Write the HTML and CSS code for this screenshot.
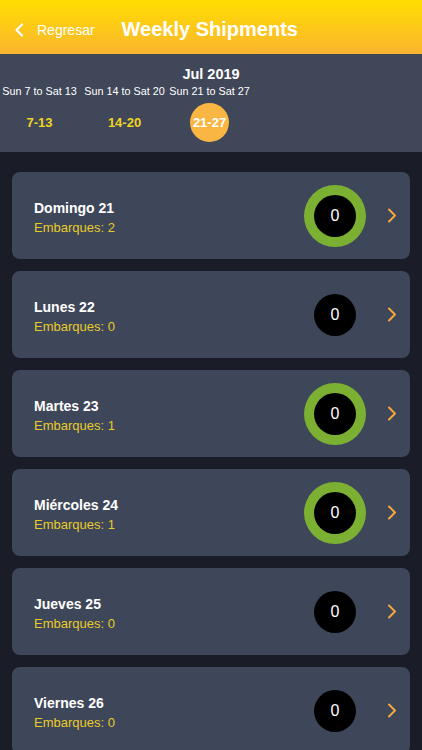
FILE: index.html
```html
<!DOCTYPE html>
<html lang="es">
<head>
    <meta charset="UTF-8">
    <meta name="viewport" content="width=device-width, initial-scale=1.0">
    <title>Weekly Shipments</title>
    <link rel="stylesheet" href="styles.css">
</head>
<body>
    <div class="header">
        <a class="back" href="#">
            <svg width="10" height="14" viewBox="0 0 10 14"><path d="M8 1.5 L2.5 7 L8 12.5" fill="none" stroke="#fff" stroke-width="2.2" stroke-linecap="round" stroke-linejoin="round"/></svg>
            <span>Regresar</span>
        </a>
        <h1>Weekly Shipments</h1>
    </div>

    <div class="weeks">
        <div class="month">Jul 2019</div>
        <div class="week-row">
            <div class="week">
                <div class="week-label">Sun 7 to Sat 13</div>
                <div class="week-num">7-13</div>
            </div>
            <div class="week">
                <div class="week-label">Sun 14 to Sat 20</div>
                <div class="week-num">14-20</div>
            </div>
            <div class="week selected">
                <div class="week-label">Sun 21 to Sat 27</div>
                <div class="week-num">21-27</div>
            </div>
        </div>
    </div>

    <div class="days">
        <div class="day">
            <div class="day-info">
                <div class="day-name">Domingo 21</div>
                <div class="day-count">Embarques: 2</div>
            </div>
            <div class="badge ring"><span>0</span></div>
            <svg class="chev" width="10" height="15" viewBox="0 0 10 15"><path d="M2 1.5 L8 7.5 L2 13.5" fill="none" stroke="#f6a93b" stroke-width="2" stroke-linecap="round" stroke-linejoin="round"/></svg>
        </div>
        <div class="day">
            <div class="day-info">
                <div class="day-name">Lunes 22</div>
                <div class="day-count">Embarques: 0</div>
            </div>
            <div class="badge"><span>0</span></div>
            <svg class="chev" width="10" height="15" viewBox="0 0 10 15"><path d="M2 1.5 L8 7.5 L2 13.5" fill="none" stroke="#f6a93b" stroke-width="2" stroke-linecap="round" stroke-linejoin="round"/></svg>
        </div>
        <div class="day">
            <div class="day-info">
                <div class="day-name">Martes 23</div>
                <div class="day-count">Embarques: 1</div>
            </div>
            <div class="badge ring"><span>0</span></div>
            <svg class="chev" width="10" height="15" viewBox="0 0 10 15"><path d="M2 1.5 L8 7.5 L2 13.5" fill="none" stroke="#f6a93b" stroke-width="2" stroke-linecap="round" stroke-linejoin="round"/></svg>
        </div>
        <div class="day">
            <div class="day-info">
                <div class="day-name">Miércoles 24</div>
                <div class="day-count">Embarques: 1</div>
            </div>
            <div class="badge ring"><span>0</span></div>
            <svg class="chev" width="10" height="15" viewBox="0 0 10 15"><path d="M2 1.5 L8 7.5 L2 13.5" fill="none" stroke="#f6a93b" stroke-width="2" stroke-linecap="round" stroke-linejoin="round"/></svg>
        </div>
        <div class="day">
            <div class="day-info">
                <div class="day-name">Jueves 25</div>
                <div class="day-count">Embarques: 0</div>
            </div>
            <div class="badge"><span>0</span></div>
            <svg class="chev" width="10" height="15" viewBox="0 0 10 15"><path d="M2 1.5 L8 7.5 L2 13.5" fill="none" stroke="#f6a93b" stroke-width="2" stroke-linecap="round" stroke-linejoin="round"/></svg>
        </div>
        <div class="day">
            <div class="day-info">
                <div class="day-name">Viernes 26</div>
                <div class="day-count">Embarques: 0</div>
            </div>
            <div class="badge"><span>0</span></div>
            <svg class="chev" width="10" height="15" viewBox="0 0 10 15"><path d="M2 1.5 L8 7.5 L2 13.5" fill="none" stroke="#f6a93b" stroke-width="2" stroke-linecap="round" stroke-linejoin="round"/></svg>
        </div>
    </div>
</body>
</html>
```

FILE: styles.css
```css
body {
    font-family: 'Liberation Sans', Arial, sans-serif;
    margin: 0;
    background-color: #1a1c27;
    color: white;
    height: 750px;
    overflow: hidden;
}
.header {
    height: 54px;
    display: flex;
    align-items: center;
    background: linear-gradient(180deg, #ffdd00 0%, #fab530 100%);
    box-sizing: border-box;
    padding: 5px 0 0 14px;
}
.back {
    display: flex;
    align-items: center;
    color: white;
    text-decoration: none;
    font-size: 14px;
}
.back svg {
    margin-right: 13px;
}
h1 {
    margin: 0 0 0 27px;
    font-size: 20px;
    font-weight: bold;
    color: white;
}
.weeks {
    background-color: #3f4759;
    height: 98px;
    box-sizing: border-box;
    padding-top: 12px;
}
.month {
    text-align: center;
    font-size: 14.5px;
    font-weight: bold;
    line-height: 17px;
}
.week-row {
    display: flex;
    margin-left: -3px;
}
.week {
    width: 85px;
    display: flex;
    flex-direction: column;
    align-items: center;
}
.week-label {
    font-size: 10.8px;
    line-height: 13px;
    margin-top: 2px;
    white-space: nowrap;
}
.week-num {
    width: 39px;
    height: 39px;
    border-radius: 50%;
    margin-top: 5px;
    display: flex;
    align-items: center;
    justify-content: center;
    font-size: 13px;
    font-weight: bold;
    color: #f2d322;
}
.selected .week-num {
    background-color: #f9b643;
    color: white;
}
.days {
    padding: 20px 12px;
    display: flex;
    flex-direction: column;
    gap: 12px;
}
.day {
    height: 87px;
    background-color: #3e4659;
    border-radius: 8px;
    display: flex;
    align-items: center;
    padding: 0 13px 0 22px;
    flex-shrink: 0;
}
.day-info {
    flex: 1;
    margin-top: 4px;
}
.day-name {
    font-size: 14px;
    font-weight: bold;
    line-height: 18px;
}
.day-count {
    font-size: 13px;
    color: #e8cc2a;
    line-height: 18px;
    margin-top: 2px;
}
.badge {
    width: 62px;
    height: 62px;
    display: flex;
    align-items: center;
    justify-content: center;
    border-radius: 50%;
}
.badge span {
    width: 42px;
    height: 42px;
    border-radius: 50%;
    background-color: black;
    display: flex;
    align-items: center;
    justify-content: center;
    font-size: 16px;
}
.ring {
    background-color: #7cb032;
}
.chev {
    margin-left: 21px;
}
```
